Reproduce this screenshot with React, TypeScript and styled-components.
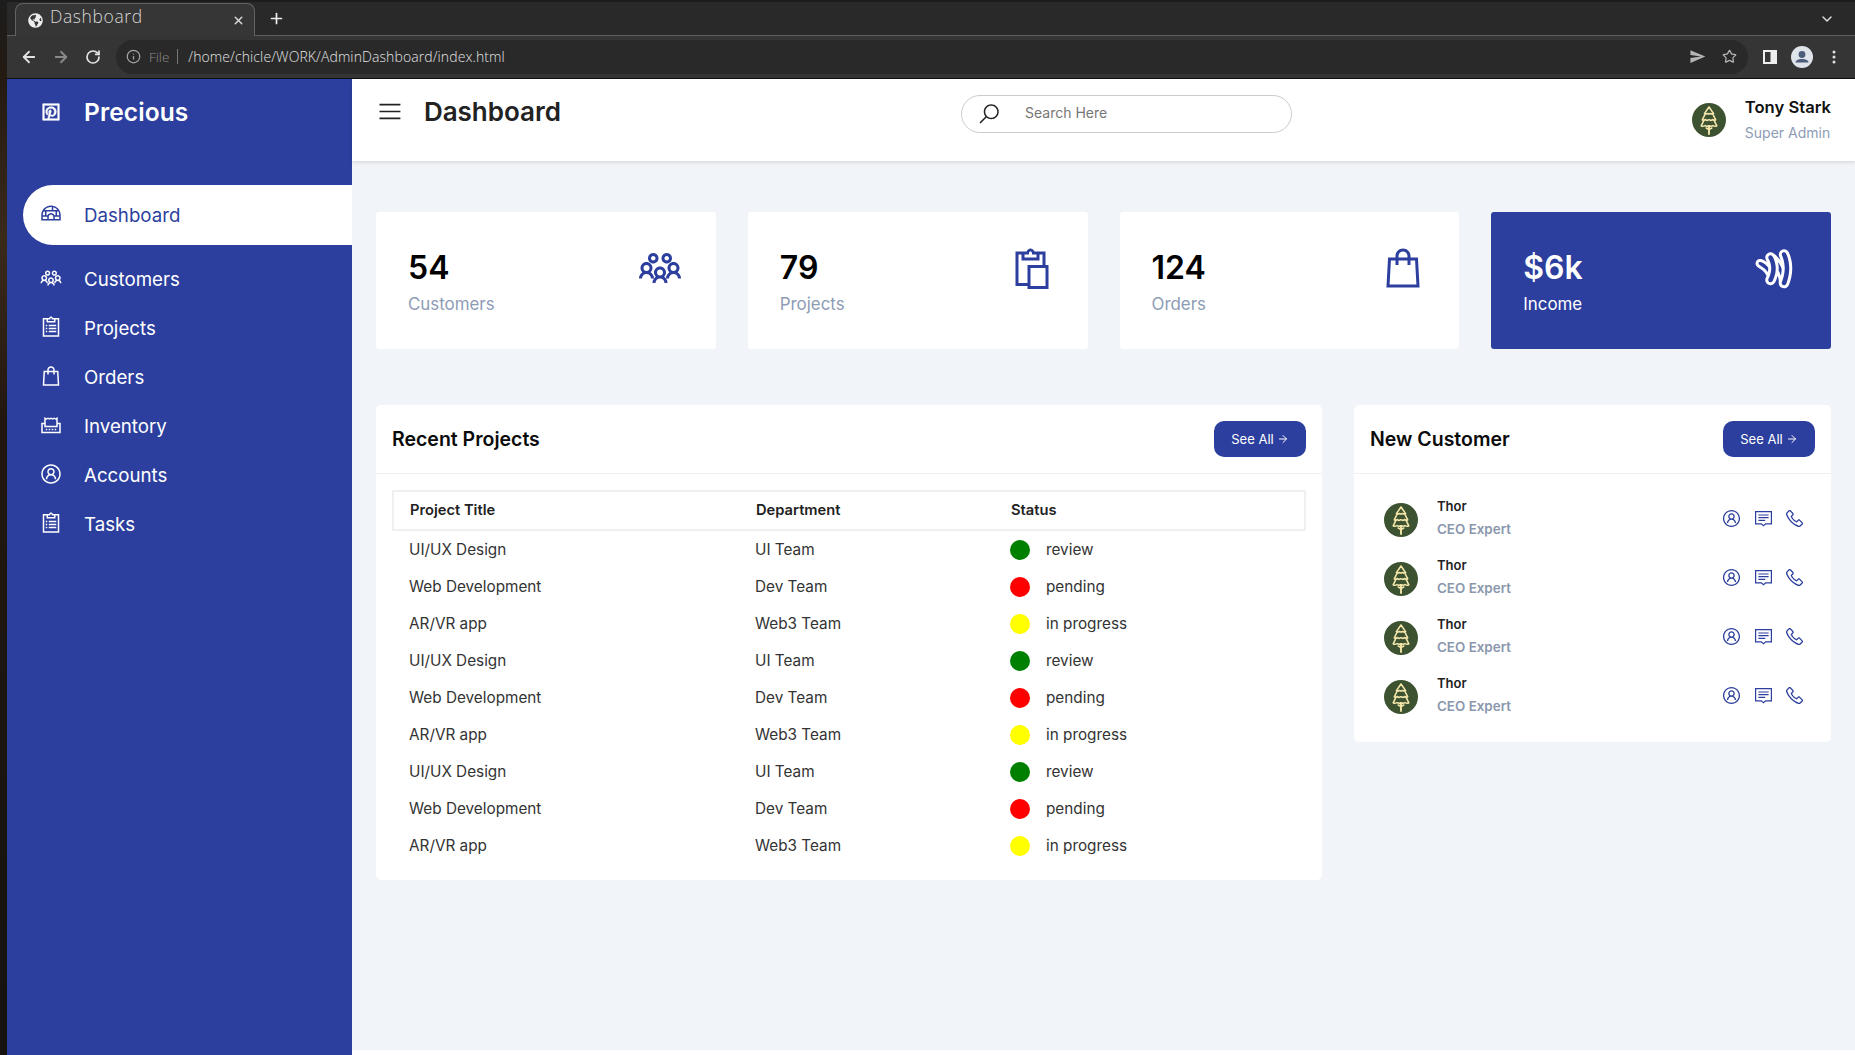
import React from "react";
import styled, { createGlobalStyle } from "styled-components";
import { ArrowLeft, ArrowRight, RotateCw, Info, Star, ChevronDown, X, Plus } from "lucide-react";
import { FaGlobeAmericas } from "react-icons/fa";
import { MdSend } from "react-icons/md";
import {
  LiaPinterestSquare, LiaBarsSolid, LiaSearchSolid, LiaIglooSolid, LiaUsersSolid, LiaClipboardListSolid,
  LiaShoppingBagSolid, LiaReceiptSolid, LiaUserCircle, LiaPasteSolid, LiaGoogleWallet, LiaPhoneSolid,
} from "react-icons/lia";

const BLUE = "#2c3f9e";
const SANS = `Inter, "Liberation Sans", sans-serif`;

const Global = createGlobalStyle`
  html, body { margin: 0; padding: 0; height: 100%; overflow: hidden; background: #15120f; }
  * { box-sizing: border-box; }
  #root { height: 100%; }
`;

const Screen = styled.div`display: flex; width: 1855px; height: 1055px; font-family: ${SANS};`;
const Wallpaper = styled.div`width: 7px; flex: none; background: linear-gradient(180deg, #1d1d1d 0, #241a12 79px, #3a2a1a 240px, #221710 420px, #15120f 100%);`;
const Window = styled.div`flex: 1; min-width: 0; display: flex; flex-direction: column;`;

const TabStrip = styled.div`height: 36px; flex: none; display: flex; align-items: flex-end; padding: 2px 0 0 8px; background: #292929; border-top: 2px solid #1c1c1c; border-bottom: 1px solid #5e5e5e; position: relative;`;
const Tab = styled.div`width: 240px; height: 33px; margin-bottom: -1px; display: flex; align-items: center; color: #d8d8d8; background: #363636; border: 1px solid #636363; border-bottom: 0; border-radius: 8px 8px 0 0; padding: 0 9px 0 12px;`;
const TabTitle = styled.span`flex: 1; margin-left: 7px; padding-bottom: 8px; font: 300 17.5px "Open Sans", sans-serif; letter-spacing: 0.6px;`;
const NewTab = styled.div`margin: 0 0 8px 13px; color: #eee; display: flex;`;
const StripSpacer = styled.div`flex: 1;`;
const StripChevron = styled.div`display: flex; color: #ddd; margin: 0 20px 8px 0;`;

const Toolbar = styled.div`height: 43px; flex: none; display: flex; align-items: center; background: #353535; padding: 0 0 1px 6px; border-bottom: 1px solid #0e0e0e;`;
const NavBtn = styled.div<{ $dim?: boolean }>`width: 32px; display: flex; justify-content: center; color: ${(p) => (p.$dim ? "#8a8a8a" : "#e2e2e2")};`;
const AddressBar = styled.div`flex: none; width: 1632px; height: 34px; margin-left: 7px; border-radius: 17px; background: #292929; display: flex; align-items: center; padding: 0 3px 0 10px; color: #bdbdbd;`;
const FileLabel = styled.span`margin-left: 8px; font: 300 13.5px "Open Sans", sans-serif; color: #8f8f8f;`;
const Separator = styled.span`width: 1px; height: 15px; margin: 0 10px 0 8px; background: #777;`;
const Url = styled.span`flex: 1; font: 300 14px "Open Sans", sans-serif; color: #e3e3e3; letter-spacing: 0.1px;`;
const BarAction = styled.div`width: 32px; display: flex; justify-content: center; color: #b5b5b5;`;
const ChromeActions = styled.div`flex: 1; display: flex; align-items: center; padding-left: 6px;`;
const ChromeAction = styled.div`width: 32px; display: flex; justify-content: center;`;

const Body = styled.div`flex: 1; min-height: 0; display: flex;`;
const Sidebar = styled.aside`width: 345px; flex: none; background: ${BLUE}; color: #fff; padding-top: 16px;`;
const Brand = styled.div`height: 34px; display: flex; align-items: center; padding-left: 32px; gap: 21px; margin-bottom: 56px;`;
const BrandName = styled.span`font-size: 24.5px; font-weight: 600; letter-spacing: 0.1px;`;
const Nav = styled.nav`margin-left: 16px;`;
const NavItem = styled.a<{ $active?: boolean }>`
  display: flex; align-items: center; gap: 21px; padding-left: 16px;
  height: ${(p) => (p.$active ? "60px" : "49px")};
  margin-bottom: ${(p) => (p.$active ? "10px" : "0")};
  font-size: 18.7px;
  color: ${(p) => (p.$active ? BLUE : "#fff")};
  background: ${(p) => (p.$active ? "#fff" : "transparent")};
  border-radius: 30px 0 0 30px;
  svg { margin-bottom: 4px; flex: none; }
`;

const Main = styled.main`flex: 1; min-width: 0; display: flex; flex-direction: column; background: #fff;`;
const Topbar = styled.header`height: 82px; flex: none; display: flex; justify-content: space-between; align-items: flex-start; padding: 15px 24px 0 24px; background: #fff; box-shadow: 0 1px 4px rgba(0,0,0,.14); position: relative;`;
const TitleGroup = styled.div`width: 185px; height: 34px; display: flex; align-items: center; gap: 20px; color: #222;`;
const PageTitle = styled.h1`margin: 0; font-size: 26px; font-weight: 600; white-space: nowrap;`;
const SearchBox = styled.div`width: 331px; height: 38px; margin-top: 1px; display: flex; align-items: center; gap: 24px; padding-left: 15px; border: 1px solid #ccc; border-radius: 20px; color: #222;`;
const SearchInput = styled.span`font-size: 14px; color: #767676; padding-bottom: 4px;`;
const UserBox = styled.div`width: 139px; height: 50px; margin-top: 1px; display: flex; align-items: center; justify-content: space-between;`;
const UserText = styled.div`display: flex; flex-direction: column; gap: 3px;`;
const UserName = styled.div`font-size: 16.6px; font-weight: 600; color: #111; line-height: 23px; white-space: nowrap;`;
const UserRole = styled.div`font-size: 14px; color: #8d9cb5; line-height: 22px; white-space: nowrap;`;

const Content = styled.div`flex: 1; background: #f1f4f9; padding: 51px 24px 0 24px;`;
const BottomGap = styled.div`height: 5px; flex: none; background: #fff;`;
const Stats = styled.section`display: grid; grid-template-columns: repeat(4, 1fr); gap: 32px;`;
const StatCard = styled.div<{ $accent?: boolean }>`
  height: 137px; padding: 32px; display: flex; justify-content: space-between; border-radius: 3px;
  background: ${(p) => (p.$accent ? BLUE : "#fff")};
  color: ${(p) => (p.$accent ? "#fff" : BLUE)};
`;
const StatValue = styled.div<{ $accent?: boolean }>`font-size: 32px; line-height: 48px; font-weight: 600; color: ${(p) => (p.$accent ? "#fff" : "#000")};`;
const StatLabel = styled.div<{ $accent?: boolean }>`font-size: 16.9px; line-height: 24px; color: ${(p) => (p.$accent ? "#fff" : "#8d9cb5")};`;

const Panels = styled.section`display: grid; grid-template-columns: 946px 477px; gap: 32px; margin-top: 56px; align-items: start;`;
const Panel = styled.div`background: #fff; border-radius: 5px;`;
const PanelHead = styled.div`display: flex; align-items: center; justify-content: space-between; padding: 16px; border-bottom: 1px solid #f0f0f0;`;
const PanelTitle = styled.h3`margin: 0; font-size: 19.5px; font-weight: 600; color: #0b0b0b;`;
const SeeAll = styled.button`width: 92px; height: 36px; border: 0; border-radius: 10px; background: ${BLUE}; color: #fff; font: 400 13px ${SANS}; padding: 0; display: flex; align-items: center; justify-content: center; gap: 3px;`;
const TableWrap = styled.div`padding: 16px;`;
const Row = styled.div`display: grid; grid-template-columns: 346px 255px 1fr; height: 37px; align-items: center; padding: 0 0 1px 17px; font-size: 15.3px; color: #333;`;
const HeadRow = styled(Row)`height: 41px; border: 2px solid #f0f0f0; font-weight: 600; color: #222; font-size: 14.7px; padding: 0 0 1px 16px;`;
const StatusCell = styled.div`display: flex; align-items: center; gap: 16px;`;
const Dot = styled.span<{ $c: string }>`width: 20px; height: 20px; border-radius: 50%; background: ${(p) => p.$c}; margin-top: 1px;`;
const CustomerList = styled.div`padding: 16px 26px 16px 30px;`;
const Customer = styled.div`height: 59px; display: flex; align-items: center; gap: 19px;`;
const CustomerText = styled.div`flex: 1; padding-bottom: 5px;`;
const CustomerName = styled.div`font-size: 13px; font-weight: 600; line-height: 24px; color: #222;`;
const CustomerRole = styled.div`font-size: 13.4px; font-weight: 600; line-height: 22px; color: #8a97ad;`;
const CustomerActions = styled.div`display: flex; gap: 10.5px; color: ${BLUE}; padding-bottom: 3px;`;

const Tree = ({ size = 34 }: { size?: number }) => (
  <svg width={size} height={size} viewBox="0 0 34 34" style={{ flex: "none" }}>
    <circle cx="17" cy="17" r="17" fill="#3c5231" />
    <g fill="none" stroke="#f5e6ab" strokeWidth="1.6" strokeLinejoin="round" strokeLinecap="round">
      <path d="M17 4 12.4 10.600c1.400.8 2.400.3 3.100-.1.9.6 2.100.6 3 0 .8.4 1.700.9 3.100.1z" />
      <path d="M13.200 11 10.300 16.800c1.300.9 2.300.2 3.300-.2 1 .9 2.300.9 3.400.1 1.100.8 2.400.8 3.400-.1 1 .4 2 1.100 3.300.2L20.800 11" />
      <path d="M12 17.200 9.200 22.800c1.500.9 2.600.4 3.800-.2 1.300.9 2.600.8 4 .1 1.400.7 2.700.8 4-.1 1.200.6 2.300 1.100 3.800.2L22 17.200" />
      <path d="M17 23V31" strokeWidth="1.900" />
      <path d="M14.200 25 17 26.500 19.800 25" />
    </g>
  </svg>
);

const CommentLines = ({ size = 21 }: { size?: number }) => (
  <svg width={size} height={size} viewBox="0 0 21 21" fill="none" stroke="currentColor" strokeWidth="1.200" style={{ flex: "none" }}>
    <path d="M2.600 3.600h15.800v12.200h-5.700l-2.200 2-2.200-2H2.600z" />
    <path d="M5.400 7h10.200M5.400 9.700h10.200M5.400 12.400h6.800" />
  </svg>
);

const stats = [
  { v: "54", l: "Customers", I: LiaUsersSolid },
  { v: "79", l: "Projects", I: LiaPasteSolid },
  { v: "124", l: "Orders", I: LiaShoppingBagSolid },
  { v: "$6k", l: "Income", I: LiaGoogleWallet, accent: true },
];
const nav = [
  { l: "Dashboard", I: LiaIglooSolid, active: true },
  { l: "Customers", I: LiaUsersSolid },
  { l: "Projects", I: LiaClipboardListSolid },
  { l: "Orders", I: LiaShoppingBagSolid },
  { l: "Inventory", I: LiaReceiptSolid },
  { l: "Accounts", I: LiaUserCircle },
  { l: "Tasks", I: LiaClipboardListSolid },
];
const base = [
  ["UI/UX Design", "UI Team", "green", "review"],
  ["Web Development", "Dev Team", "red", "pending"],
  ["AR/VR app", "Web3 Team", "yellow", "in progress"],
];
const rows = [...base, ...base, ...base];

export default function App() {
  return (
    <Screen>
      <Global />
      <Wallpaper />
      <Window>
        <TabStrip>
          <Tab>
            <FaGlobeAmericas size={15} color="#eee" />
            <TabTitle>Dashboard</TabTitle>
            <X size={13} strokeWidth={2.5} color="#ddd" />
          </Tab>
          <NewTab><Plus size={17} strokeWidth={2.4} /></NewTab>
          <StripSpacer />
          <StripChevron><ChevronDown size={16} strokeWidth={2.2} /></StripChevron>
        </TabStrip>
        <Toolbar>
          <NavBtn><ArrowLeft size={18} strokeWidth={2.4} /></NavBtn>
          <NavBtn $dim><ArrowRight size={18} strokeWidth={2.4} /></NavBtn>
          <NavBtn><RotateCw size={16} strokeWidth={2.6} /></NavBtn>
          <AddressBar>
            <Info size={15} color="#a5a5a5" />
            <FileLabel>File</FileLabel>
            <Separator />
            <Url>/home/chicle/WORK/AdminDashboard/index.html</Url>
            <BarAction><MdSend size={17} /></BarAction>
            <BarAction><Star size={15} strokeWidth={2} /></BarAction>
          </AddressBar>
          <ChromeActions>
            <ChromeAction>
              <svg width="14" height="14" viewBox="0 0 14 14"><path fill="#eee" fillRule="evenodd" d="M0 0h14v14H0zM2 2v10h5.500V2z" /></svg>
            </ChromeAction>
            <ChromeAction>
              <svg width="22" height="22" viewBox="0 0 22 22"><circle cx="11" cy="11" r="11" fill="#dfe3ea" /><circle cx="11" cy="8.500" r="3.400" fill="#4d5c7a" /><path d="M4.500 16.500c0-2.400 3-3.600 6.500-3.600s6.500 1.200 6.500 3.600z" fill="#4d5c7a" /></svg>
            </ChromeAction>
            <ChromeAction>
              <svg width="4" height="14" viewBox="0 0 4 14" fill="#e2e2e2"><circle cx="2" cy="2" r="1.500" /><circle cx="2" cy="7" r="1.500" /><circle cx="2" cy="12" r="1.500" /></svg>
            </ChromeAction>
          </ChromeActions>
        </Toolbar>
        <Body>
          <Sidebar>
            <Brand>
              <LiaPinterestSquare size={24} color="#fff" stroke="#fff" strokeWidth={0.8} />
              <BrandName>Precious</BrandName>
            </Brand>
            <Nav>
              {nav.map(({ l, I, active }) => (
                <NavItem key={l} $active={active}><I size={24} />{l}</NavItem>
              ))}
            </Nav>
          </Sidebar>
          <Main>
            <Topbar>
              <TitleGroup>
                <LiaBarsSolid size={29} />
                <PageTitle>Dashboard</PageTitle>
              </TitleGroup>
              <SearchBox>
                <LiaSearchSolid size={24} />
                <SearchInput>Search Here</SearchInput>
              </SearchBox>
              <UserBox>
                <Tree />
                <UserText>
                  <UserName>Tony Stark</UserName>
                  <UserRole>Super Admin</UserRole>
                </UserText>
              </UserBox>
            </Topbar>
            <Content>
              <Stats>
                {stats.map(({ v, l, I, accent }) => (
                  <StatCard key={l} $accent={accent}>
                    <div>
                      <StatValue $accent={accent}>{v}</StatValue>
                      <StatLabel $accent={accent}>{l}</StatLabel>
                    </div>
                    <I size={48} />
                  </StatCard>
                ))}
              </Stats>
              <Panels>
                <Panel>
                  <PanelHead>
                    <PanelTitle>Recent Projects</PanelTitle>
                    <SeeAll>See All <ArrowRight size={12} /></SeeAll>
                  </PanelHead>
                  <TableWrap>
                    <HeadRow><div>Project Title</div><div>Department</div><div>Status</div></HeadRow>
                    {rows.map((r, i) => (
                      <Row key={i}>
                        <div>{r[0]}</div>
                        <div>{r[1]}</div>
                        <StatusCell><Dot $c={r[2]} />{r[3]}</StatusCell>
                      </Row>
                    ))}
                  </TableWrap>
                </Panel>
                <Panel>
                  <PanelHead>
                    <PanelTitle>New Customer</PanelTitle>
                    <SeeAll>See All <ArrowRight size={12} /></SeeAll>
                  </PanelHead>
                  <CustomerList>
                    {[0, 1, 2, 3].map((i) => (
                      <Customer key={i}>
                        <Tree />
                        <CustomerText>
                          <CustomerName>Thor</CustomerName>
                          <CustomerRole>CEO Expert</CustomerRole>
                        </CustomerText>
                        <CustomerActions>
                          <LiaUserCircle size={21} />
                          <CommentLines />
                          <LiaPhoneSolid size={21} />
                        </CustomerActions>
                      </Customer>
                    ))}
                  </CustomerList>
                </Panel>
              </Panels>
            </Content>
            <BottomGap />
          </Main>
        </Body>
      </Window>
    </Screen>
  );
}
